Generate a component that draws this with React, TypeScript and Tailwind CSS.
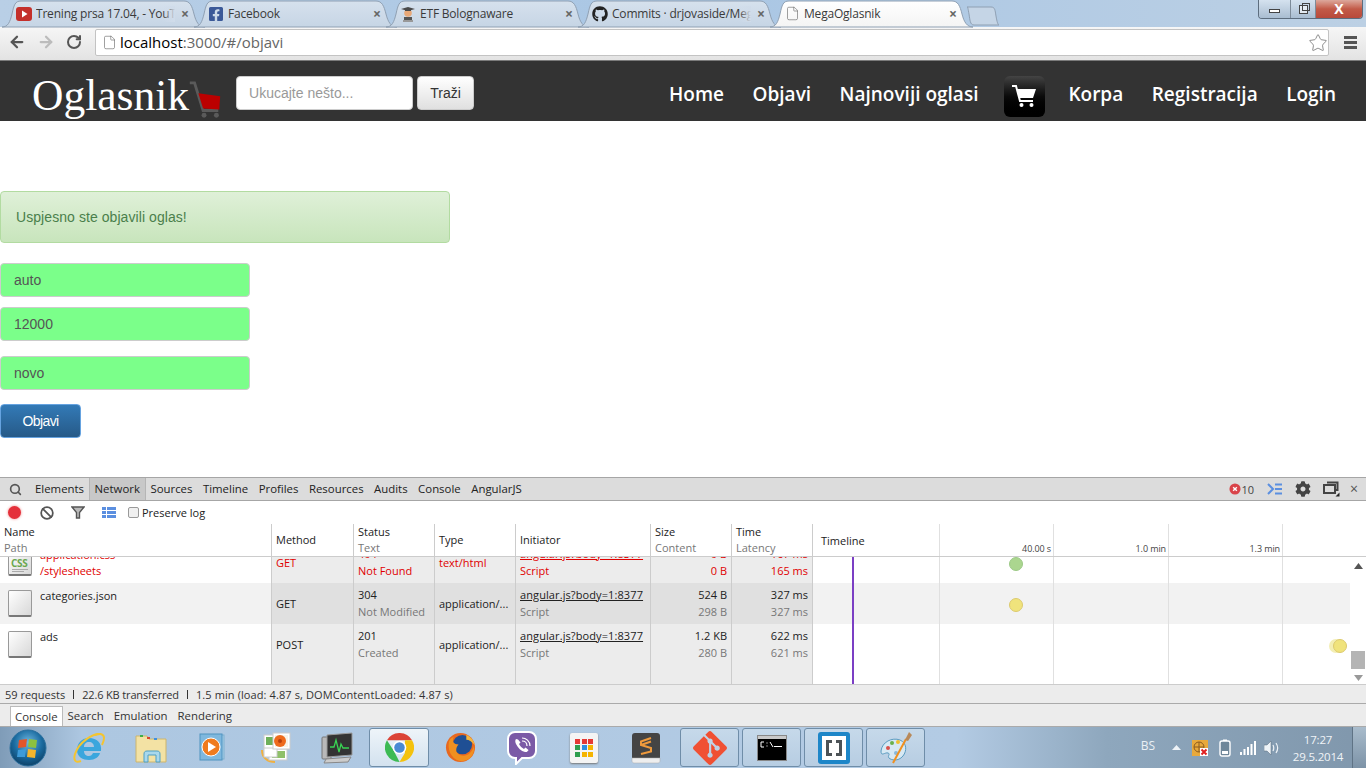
import React from "react";
import { ArrowLeft, ArrowRight, RotateCw, Star, File, Search, Ban } from "lucide-react";
import { FaGithub, FaFacebookSquare, FaCog } from "react-icons/fa";
import { SiGit } from "react-icons/si";

const ui = "font-['Open_Sans',sans-serif]";

function TabShape({ active }: { active?: boolean }) {
  return (
    <svg className="absolute left-0 top-0 overflow-visible" width="204" height="27" viewBox="0 0 204 27">
      <defs>
        <linearGradient id="tabIdle" x1="0" y1="0" x2="0" y2="1">
          <stop offset="0" stopColor="#d6e1ed" />
          <stop offset="1" stopColor="#c6d5e5" />
        </linearGradient>
        <linearGradient id="tabActive" x1="0" y1="0" x2="0" y2="1">
          <stop offset="0" stopColor="#ffffff" />
          <stop offset="1" stopColor="#f4f4f4" />
        </linearGradient>
      </defs>
      <path
        d="M0 27 C6 27 8 22 10 14 C12 5 13 1 19 1 L182 1 C188 1 190 6 192 14 C194 22 197 27 203 27 Z"
        fill={active ? "url(#tabActive)" : "url(#tabIdle)"}
        stroke="#8fa0b3"
        strokeWidth="1"
      />
    </svg>
  );
}

function Tab({ icon, title, active, fade }: { icon: React.ReactNode; title: string; active?: boolean; fade?: boolean }) {
  return (
    <div className={active ? "relative z-10 h-[27px] w-[192px] shrink-0" : "relative h-[27px] w-[192px] shrink-0"}>
      <TabShape active={active} />
      <div className="relative flex h-full items-center pl-[14px]">
        <span className="flex h-4 w-4 shrink-0 items-center justify-center">{icon}</span>
        <span className="relative ml-[4px] w-[139px] overflow-hidden whitespace-nowrap text-[12px] leading-4 tracking-[-0.2px] text-[#3a3a3a]">
          {title}
          {fade && <span className="absolute right-0 top-0 h-full w-3 bg-linear-to-r from-transparent to-[#d0dcea]" />}
        </span>
        <span className="ml-[6px] text-[14px] font-bold leading-none text-[#666]">×</span>
      </div>
    </div>
  );
}

function EtfIcon() {
  return (
    <svg width="16" height="16" viewBox="0 0 16 16">
      <circle cx="8" cy="7" r="3.8" fill="#e8a878" />
      <path d="M1 3 L8 1 L15 3 L8 5 Z" fill="#4a4a4a" />
      <path d="M5 3 h6 v2 h-6z" fill="#4a4a4a" />
      <rect x="4" y="11" width="8" height="3" fill="#555" />
      <rect x="3" y="14" width="10" height="2" fill="#999" />
    </svg>
  );
}

function WindowControls() {
  return (
    <div className="mr-[3px] flex h-[19px] overflow-hidden rounded-b-[4px] border border-t-0 border-[#5d6d7e]">
      <div className="flex w-[31px] items-center justify-center bg-linear-to-b from-[#d5e2ef] to-[#a9bdd1]">
        <div className="mt-1 h-[4px] w-[11px] border border-[#444] bg-white" />
      </div>
      <div className="flex w-[26px] items-center justify-center border-x border-[#7d8b99] bg-linear-to-b from-[#d5e2ef] to-[#a9bdd1]">
        <div className="relative h-[9px] w-[9px] border border-[#444] bg-white/60">
          <div className="absolute -right-[3px] -top-[3px] h-[8px] w-[8px] border border-[#444]" />
        </div>
      </div>
      <div className="flex w-[46px] items-center justify-center bg-linear-to-b from-[#dca89c] via-[#c25a48] to-[#b8493a] text-[14px] font-bold leading-none text-white">
        X
      </div>
    </div>
  );
}

function BrowserChrome() {
  return (
    <div className={ui}>
      <div className="flex h-[27px] items-start bg-linear-to-r from-[#b9cfe6] via-[#a9c6e4] to-[#bcd0e4] pl-[2px]">
        <div className="flex">
          <Tab fade title="Trening prsa 17.04, - YouT" icon={
            <svg width="16" height="14" viewBox="0 0 16 14"><rect width="16" height="14" rx="3" fill="#c4302b" /><path d="M6 3.5 L11.5 7 L6 10.5Z" fill="#fff" /></svg>
          } />
          <Tab title="Facebook" icon={<FaFacebookSquare className="text-[#3b5998]" size={16} />} />
          <Tab title="ETF Bolognaware" icon={<EtfIcon />} />
          <Tab fade title="Commits · drjovaside/Meg" icon={<FaGithub className="text-[#222]" size={16} />} />
          <Tab active title="MegaOglasnik" icon={<File size={15} strokeWidth={1} className="text-[#666]" />} />
        </div>
        <svg className="ml-[4px] mt-[6px]" width="34" height="20" viewBox="0 0 34 20">
          <path d="M1 1 H25 C29 1 29 4 30 10 C31 16 32 19 33 19 H8 C4 19 4 14 3 8 C2 3 2 1 1 1Z" fill="#c5d5e6" stroke="#8fa0b3" />
        </svg>
        <div className="flex-1" />
        <WindowControls />
      </div>
      <div className="flex h-[34px] items-start border-b border-[#7b7b7b] bg-linear-to-b from-[#f6f6f6] to-[#e3e3e3] pt-[2px]">
        <div className="flex h-[26px] w-[95px] items-center pl-[8px]">
          <ArrowLeft size={18} strokeWidth={3} className="text-[#555]" />
          <ArrowRight size={18} strokeWidth={3} className="ml-[11px] text-[#bcbcbc]" />
          <RotateCw size={16} strokeWidth={3} className="ml-[11px] text-[#555]" />
        </div>
        <div className="flex h-[27px] flex-1 items-center rounded-[2px] border border-[#c3c3c3] bg-white pl-[6px]">
          <File size={15} strokeWidth={1} className="text-[#666]" />
          <span className="ml-[3px] text-[15px] leading-none text-black">localhost<span className="text-[#666]">:3000/#/objavi</span></span>
          <div className="flex-1" />
          <Star size={20} strokeWidth={1} className="text-[#777]" />
        </div>
        <div className="flex h-[26px] w-[37px] flex-col items-center justify-center gap-[2px] pl-[6px]">
          <div className="h-[3px] w-[13px] bg-[#555]" />
          <div className="h-[3px] w-[13px] bg-[#555]" />
          <div className="h-[3px] w-[13px] bg-[#555]" />
        </div>
      </div>
    </div>
  );
}

function Navbar() {
  return (
    <nav className="flex h-[60px] items-center bg-[#333333] pl-[32px] pr-[30px] pt-[4px]">
      <span className="mt-[5px] font-['Liberation_Serif',serif] text-[43.5px] leading-none text-white">Oglasnik</span>
      <svg className="-ml-[1px] mt-[13px]" width="34" height="38" viewBox="0 0 34 40">
        <path d="M1 2 L6 2 L15 31 L31 31" fill="none" stroke="#5a5a5a" strokeWidth="3" />
        <path d="M10 13 L33 16 L32 30 L15 29 Z" fill="#bb0000" />
        <circle cx="16" cy="36" r="2.6" fill="#5a5a5a" />
        <circle cx="29" cy="36" r="2.6" fill="#5a5a5a" />
      </svg>
      <input
        readOnly
        placeholder="Ukucajte nešto..."
        className="ml-[14px] h-[34px] w-[177px] rounded-[4px] border border-[#ccc] bg-white px-[12px] font-['Liberation_Sans',sans-serif] text-[14px] placeholder:text-[#999]"
      />
      <button className="ml-[4px] h-[34px] w-[57px] rounded-[4px] border border-[#ccc] bg-linear-to-b from-white to-[#e0e0e0] font-['Liberation_Sans',sans-serif] text-[14px] text-[#333]">
        Traži
      </button>
      <div className="flex-1" />
      <div className={`mt-[2px] flex items-center gap-[28.5px] text-[19px] font-semibold leading-none text-white ${ui}`}>
        <span>Home</span>
        <span>Objavi</span>
        <span>Najnoviji oglasi</span>
        <span className="-ml-[3px] -mr-[5px] mt-[4px] flex h-[41px] w-[41px] items-center justify-center rounded-[6px] bg-linear-to-b from-[#444] via-[#0a0a0a] to-black">
          <svg width="26" height="24" viewBox="0 0 26 24">
            <path d="M1 2 L5 2 L9 17 L22 17" fill="none" stroke="#fff" strokeWidth="2" />
            <path d="M6 5 L25 5 L22 14 L8.5 14 Z" fill="#fff" />
            <circle cx="10.5" cy="21" r="2" fill="#fff" />
            <circle cx="20.5" cy="21" r="2" fill="#fff" />
          </svg>
        </span>
        <span>Korpa</span>
        <span>Registracija</span>
        <span>Login</span>
      </div>
    </nav>
  );
}

function Field({ value, className }: { value: string; className: string }) {
  return (
    <div className={`flex h-[34px] w-[250px] items-center rounded-[4px] border border-[#ccc] bg-[#7bff8a] pl-[13px] text-[14px] text-[#555] ${className}`}>
      {value}
    </div>
  );
}

function Page() {
  return (
    <main className="h-[356px] bg-white pt-[70px] font-['Liberation_Sans',sans-serif]">
      <div className="flex h-[52px] w-[450px] items-center rounded-[4px] border border-[#b2dba1] bg-linear-to-b from-[#dff0d8] to-[#c8e5bc] pl-[15px] text-[14px] tracking-[0.07px] text-[#4a7f4b]">
        Uspjesno ste objavili oglas!
      </div>
      <Field value="auto" className="mt-[20px]" />
      <Field value="12000" className="mt-[10px]" />
      <Field value="novo" className="mt-[15px]" />
      <button className="mt-[14px] flex h-[34px] w-[81px] items-center justify-center rounded-[4px] border border-[#66a3e0] bg-linear-to-b from-[#337ab7] to-[#265a88] text-[14px] tracking-[-0.6px] text-white">
        Objavi
      </button>
    </main>
  );
}

const COLS = [
  { w: "w-[272px]" },
  { w: "w-[82px]" },
  { w: "w-[81px]" },
  { w: "w-[81px]" },
  { w: "w-[135px]" },
  { w: "w-[81px]" },
  { w: "w-[81px]" },
];

function Head({ w, a, b }: { w: string; a: string; b?: string }) {
  return (
    <div className={`flex shrink-0 flex-col justify-center border-r border-[#ccc] pl-[4px] ${w}`}>
      <div className="leading-[16px] text-[#222]">{a}</div>
      {b && <div className="leading-[16px] text-[#777]">{b}</div>}
    </div>
  );
}

function Tick({ w, label }: { w: string; label: string }) {
  return (
    <div className={`relative shrink-0 border-r border-[#e0e0e0] ${w}`}>
      <span className="absolute bottom-[1px] right-[2px] whitespace-nowrap text-[9px] leading-[12px] tracking-[-0.1px] text-[#444]">{label}</span>
    </div>
  );
}

function TableHeader() {
  return (
    <div className="flex h-[33px] border-b border-[#ccc] bg-white">
      <Head w={COLS[0].w} a="Name" b="Path" />
      <Head w={COLS[1].w} a="Method" />
      <Head w={COLS[2].w} a="Status" b="Text" />
      <Head w={COLS[3].w} a="Type" />
      <Head w={COLS[4].w} a="Initiator" />
      <Head w={COLS[5].w} a="Size" b="Content" />
      <Head w={COLS[6].w} a="Time" b="Latency" />
      <div className="flex w-[127px] shrink-0 items-center border-r border-[#e0e0e0] pl-[8px] text-[#222]">Timeline</div>
      <Tick w="w-[114px]" label="40.00 s" />
      <Tick w="w-[115px]" label="1.0 min" />
      <Tick w="w-[114px]" label="1.3 min" />
      <div className="flex-1" />
    </div>
  );
}

type Row = {
  icon: "css" | "blank";
  name: string;
  path?: string;
  method: string;
  status: string;
  text: string;
  type: string;
  size: string;
  content: string;
  time: string;
  latency: string;
  error?: boolean;
  zebra?: boolean;
};

const ROWS: Row[] = [
  { icon: "css", name: "application.css", path: "/stylesheets", method: "GET", status: "404", text: "Not Found", type: "text/html", size: "0 B", content: "0 B", time: "167 ms", latency: "165 ms", error: true },
  { icon: "blank", name: "categories.json", method: "GET", status: "304", text: "Not Modified", type: "application/...", size: "524 B", content: "298 B", time: "327 ms", latency: "327 ms", zebra: true },
  { icon: "blank", name: "ads", method: "POST", status: "201", text: "Created", type: "application/...", size: "1.2 KB", content: "280 B", time: "622 ms", latency: "621 ms" },
];

function FileIcon({ kind }: { kind: "css" | "blank" }) {
  return (
    <div className="relative mt-[7px] h-[27px] w-[24px] shrink-0 rounded-[2px] border border-[#999] border-b-2 border-b-[#777] bg-linear-to-br from-white to-[#d8d8d8]">
      {kind === "css" && (
        <>
          <span className="absolute left-[2px] top-[8px] text-[10px] font-bold leading-[10px] tracking-[-0.3px] text-[#6aa84f]">CSS</span>
          <span className="absolute left-[3px] top-[19px] h-px w-[16px] bg-[#aaa]" />
          <span className="absolute left-[3px] top-[21px] h-px w-[12px] bg-[#aaa]" />
        </>
      )}
    </div>
  );
}

function RowView({ r }: { r: Row }) {
  const main = r.error ? "text-[#e00000]" : "text-[#222]";
  const sub = r.error ? "text-[#e00000]" : "text-[#777]";
  const cell = r.zebra ? "bg-[#e0e0e0]" : "bg-[#ececec]";
  const base = r.zebra ? "bg-[#f2f2f2]" : "bg-white";
  const two = `flex shrink-0 flex-col border-r border-[#ccc] pt-[3px] leading-[17px] ${cell}`;
  const mid = `flex shrink-0 items-center border-r border-[#ccc] pl-[4px] ${cell}`;
  return (
    <div className={`flex h-[41px] ${base}`}>
      <div className={`flex shrink-0 border-r border-[#ccc] pl-[8px] ${COLS[0].w}`}>
        <FileIcon kind={r.icon} />
        <div className={`ml-[8px] pt-[4px] leading-[17px] ${main}`}>
          <div>{r.name}</div>
          {r.path && <div className="-mt-[1px]">{r.path}</div>}
        </div>
      </div>
      <div className={`${mid} ${COLS[1].w} ${main}`}>{r.method}</div>
      <div className={`${two} pl-[4px] ${COLS[2].w}`}>
        <span className={main}>{r.status}</span>
        <span className={sub}>{r.text}</span>
      </div>
      <div className={`${mid} ${COLS[3].w} ${main}`}>{r.type}</div>
      <div className={`${two} pl-[4px] ${COLS[4].w}`}>
        <span className={`underline tracking-[0.1px] ${main}`}>angular.js?body=1:8377</span>
        <span className={sub}>Script</span>
      </div>
      <div className={`${two} items-end pr-[4px] ${COLS[5].w}`}>
        <span className={main}>{r.size}</span>
        <span className={sub}>{r.content}</span>
      </div>
      <div className={`${two} items-end pr-[4px] ${COLS[6].w}`}>
        <span className={main}>{r.time}</span>
        <span className={sub}>{r.latency}</span>
      </div>
      <div className="flex-1" />
    </div>
  );
}

function Filler() {
  const c = "shrink-0 border-r border-[#ccc] bg-[#ececec]";
  return (
    <div className="flex h-[20px] bg-white">
      <div className={`shrink-0 border-r border-[#ccc] bg-white ${COLS[0].w}`} />
      {COLS.slice(1).map((col, i) => (
        <div key={i} className={`${c} ${col.w}`} />
      ))}
    </div>
  );
}

function Dot({ className, color }: { className: string; color: string }) {
  return <span className={`absolute h-[14px] w-[14px] rounded-full border ${color} ${className}`} />;
}

function TableBody() {
  return (
    <div className="flex h-[128px] border-b border-[#ccc]">
      <div className="relative flex-1 overflow-hidden">
        <div className="-mt-[15px]">
          {ROWS.map((r) => (
            <RowView key={r.name} r={r} />
          ))}
          <Filler />
        </div>
        <span className="absolute bottom-0 left-[852px] top-0 w-[2px] bg-[#7b3fc4]" />
        <span className="absolute bottom-0 left-[939px] top-0 w-px bg-[#e0e0e0]" />
        <span className="absolute bottom-0 left-[1053px] top-0 w-px bg-[#e0e0e0]" />
        <span className="absolute bottom-0 left-[1168px] top-0 w-px bg-[#e0e0e0]" />
        <span className="absolute bottom-0 left-[1282px] top-0 w-px bg-[#e0e0e0]" />
        <Dot className="left-[1009px] top-[0px]" color="border-[#9cc986] bg-[#abd68f]" />
        <Dot className="left-[1009px] top-[41px]" color="border-[#dcca6e] bg-[#f0e37c]" />
        <span className="absolute left-[1329px] top-[82px] h-[14px] w-[14px] rounded-full bg-[#f3eeb4]" />
        <Dot className="left-[1333px] top-[82px]" color="border-[#dcca6e] bg-[#f0e37c]" />
      </div>
      <div className="flex w-[16px] shrink-0 flex-col items-center bg-white">
        <svg className="mt-[6px]" width="9" height="6" viewBox="0 0 9 6"><path d="M4.5 0 L9 6 H0Z" fill="#555" /></svg>
        <div className="flex-1" />
        <div className="h-[18px] w-[14px] bg-[#b4b4b4]" />
        <svg className="mb-[3px] mt-[6px]" width="9" height="6" viewBox="0 0 9 6"><path d="M0 0 H9 L4.5 6Z" fill="#999" /></svg>
      </div>
    </div>
  );
}

function DevTools() {
  const panels = ["Elements", "Network", "Sources", "Timeline", "Profiles", "Resources", "Audits", "Console", "AngularJS"];
  return (
    <section className={`text-[11px] leading-none text-[#222] ${ui}`}>
      <div className="flex h-[24px] items-center border-y border-[#a6a6a6] bg-[#dcdcdc] pl-[9px]">
        <Search size={13} strokeWidth={3} className="text-[#555]" />
        <div className="ml-[13px] flex h-full items-center gap-[10.5px] text-[11.4px]">
          {panels.map((p) =>
            p === "Network" ? (
              <span key={p} className="-mx-[6px] flex h-full items-center border-x border-[#b5b5b5] bg-[#c8c8c8] px-[5px]">{p}</span>
            ) : (
              <span key={p}>{p}</span>
            ),
          )}
        </div>
        <div className="flex-1" />
        <svg width="12" height="12" viewBox="0 0 13 13">
          <circle cx="6.5" cy="6.5" r="6" fill="#d9444a" />
          <path d="M4.5 4.5 L8.5 8.5 M8.5 4.5 L4.5 8.5" stroke="#fff" strokeWidth="1.5" />
        </svg>
        <span className="text-[#444]">10</span>
        <svg className="ml-[13px]" width="16" height="12" viewBox="0 0 16 12">
          <path d="M1 1 L6 6 L1 11" fill="none" stroke="#5b8fe0" strokeWidth="2" />
          <path d="M8 1.5 H15 M8 6 H15 M8 10.5 H15" stroke="#5b8fe0" strokeWidth="2" />
        </svg>
        <FaCog size={16} className="ml-[12px] text-[#444]" />
        <svg className="ml-[12px]" width="17" height="16" viewBox="0 0 17 16">
          <path d="M4 1.5 H14.5 V9 H12" fill="none" stroke="#444" strokeWidth="2" />
          <rect x="1" y="4" width="11" height="8" fill="#dcdcdc" stroke="#444" strokeWidth="2" />
          <path d="M16.5 15.5 H12.5 L16.5 11.5Z" fill="#222" />
        </svg>
        <span className="ml-[10px] mr-[8px] text-[14px] text-[#555]">×</span>
      </div>
      <div className="flex h-[23px] items-center bg-white pl-[8px]">
        <span className="h-[13px] w-[13px] rounded-full bg-[#e4303a] shadow-[0_0_3px_#e88]" />
        <Ban size={14} strokeWidth={3} className="ml-[19px] text-[#555]" />
        <svg className="ml-[17px]" width="14" height="13" viewBox="0 0 14 13">
          <path d="M1 1 H13 L8.5 6.5 V12 H5.5 V6.5Z" fill="#bbb" stroke="#555" strokeWidth="1.4" />
        </svg>
        <svg className="ml-[17px]" width="14" height="11" viewBox="0 0 14 11">
          <path d="M0 0 H4 V3 H0Z M0 4 H4 V7 H0Z M0 8 H4 V11 H0Z M5 0 H14 V3 H5Z M5 4 H14 V7 H5Z M5 8 H14 V11 H5Z" fill="#5b8fe0" />
        </svg>
        <span className="ml-[12px] h-[11px] w-[11px] rounded-[2px] border border-[#999] bg-[#f0f0f0]" />
        <span className="ml-[3px]">Preserve log</span>
      </div>
      <TableHeader />
      <TableBody />
      <div className="flex h-[19px] items-center gap-[8px] border-b border-[#aaa] bg-[#ececec] pl-[5px] text-[#333]">
        <span>59 requests</span>
        <span className="h-[9px] w-px bg-[#333]" />
        <span className="tracking-[-0.15px]">22.6 KB transferred</span>
        <span className="h-[9px] w-px bg-[#333]" />
        <span className="tracking-[0.1px]">1.5 min (load: 4.87 s, DOMContentLoaded: 4.87 s)</span>
      </div>
      <div className="flex h-[23px] items-end gap-[5px] border-b border-[#aaa] bg-[#ececec] pl-[10px] text-[11.4px] text-[#333]">
        <span className="flex h-[20px] items-center border border-b-0 border-[#bbb] bg-white px-[4px]">Console</span>
        <span className="flex h-[20px] items-center">Search</span>
        <span className="ml-[5px] flex h-[20px] items-center">Emulation</span>
        <span className="ml-[5px] flex h-[20px] items-center">Rendering</span>
      </div>
    </section>
  );
}

function WinOrb() {
  return (
    <svg width="38" height="38" viewBox="0 0 38 38">
      <defs>
        <radialGradient id="orb" cx="0.5" cy="0.35" r="0.7">
          <stop offset="0" stopColor="#6fb7e0" />
          <stop offset="0.55" stopColor="#1a6ba0" />
          <stop offset="1" stopColor="#0b3a5e" />
        </radialGradient>
      </defs>
      <circle cx="19" cy="19" r="18" fill="url(#orb)" stroke="#2a6f9e" />
      <path d="M10 11 L18 10 L17 18 L9 19Z" fill="#e2552b" />
      <path d="M20 10 L28 11 L27 19 L19 18Z" fill="#8cc13f" />
      <path d="M9 21 L17 20 L16 28 L8 28Z" fill="#3d9bd9" />
      <path d="M19 20 L27 21 L26 29 L18 28Z" fill="#f5b52c" />
    </svg>
  );
}

function IeIcon() {
  return (
    <svg width="32" height="32" viewBox="0 0 32 32">
      <path d="M16 6 C8 6 4 12 4 18 C4 25 10 28 16 28 C22 28 26 25 27 21 H20 C19 23 18 24 16 24 C13 24 11 22 11 19 H28 C29 11 24 6 16 6Z M11 15 C11 12 13 10 16 10 C19 10 21 12 21 15Z" fill="#3aa6dd" fillRule="evenodd" />
      <path d="M28 2 C20 1 6 10 2 22 C0 29 3 31 8 29" fill="none" stroke="#f4c430" strokeWidth="2" />
      <path d="M22 3 C27 1 31 2 31 6 C31 9 30 11 29 13" fill="none" stroke="#f4c430" strokeWidth="2" />
    </svg>
  );
}

function FolderIcon() {
  return (
    <svg width="32" height="30" viewBox="0 0 32 30">
      <path d="M1 3 H12 L14 6 H31 V29 H1Z" fill="#f3e2a4" stroke="#cdb56c" />
      <rect x="5" y="2" width="3" height="2" fill="#3fae49" />
      <rect x="12" y="4" width="3" height="2" fill="#d9452f" />
      <rect x="19" y="5" width="3" height="2" fill="#3f8fe0" />
      <path d="M9 29 V21 C9 19 10 18 12 18 H22 C24 18 25 19 25 21 V29 H21 V22 H13 V29Z" fill="#a9d8ec" stroke="#4f9fc4" />
    </svg>
  );
}

function PlayerIcon() {
  return (
    <svg width="30" height="30" viewBox="0 0 30 30">
      <rect x="7" y="2" width="19" height="24" fill="#a8cfe8" stroke="#7fb0d0" />
      <rect x="2" y="1" width="22" height="26" fill="#7fb8de" stroke="#4f93c0" />
      <circle cx="13" cy="14" r="9" fill="#ef7b1e" stroke="#fff" strokeWidth="1" />
      <path d="M10 9 L18 14 L10 19Z" fill="#fff" />
    </svg>
  );
}

function PhotoIcon() {
  return (
    <svg width="32" height="32" viewBox="0 0 32 32">
      <path d="M3 18 C3 26 9 30 16 30" fill="none" stroke="#f0b040" strokeWidth="2" />
      <rect x="5" y="3" width="14" height="14" fill="#fff" stroke="#ccc" />
      <rect x="7" y="5" width="10" height="8" fill="#6fb05a" />
      <rect x="10" y="17" width="18" height="11" fill="#fff" stroke="#ccc" />
      <rect x="13" y="19" width="13" height="7" fill="#8fc069" />
      <rect x="5" y="16" width="13" height="9" fill="#fff" stroke="#ccc" />
      <rect x="14" y="1" width="17" height="16" fill="#fff" stroke="#ccc" />
      <rect x="16" y="3" width="13" height="12" fill="#f7f3e8" />
      <circle cx="21" cy="9" r="6" fill="#ee6a1c" />
      <circle cx="21" cy="9" r="2" fill="#b9400c" />
    </svg>
  );
}

function MonitorIcon() {
  return (
    <svg width="32" height="32" viewBox="0 0 32 32">
      <rect x="1" y="5" width="9" height="22" rx="1" fill="#b9b9b9" stroke="#777" />
      <path d="M6 3 L31 1 V23 L6 25Z" fill="#333" stroke="#999" />
      <path d="M9 15 H13 L15 8 L18 20 L20 12 L22 16 H28" fill="none" stroke="#39d353" strokeWidth="1.3" />
      <path d="M5 27 L30 25 L27 30 L3 31Z" fill="#ccc" stroke="#888" />
    </svg>
  );
}

function ChromeIcon() {
  return (
    <svg width="29" height="29" viewBox="-16 -16 32 32">
      <path d="M-13.86 -8 A16 16 0 0 1 13.86 -8 L0 -8 Z" fill="#db4437" />
      <path d="M13.86 -8 A16 16 0 0 1 0 16 L6 6 L6 -8Z" fill="#f4c20d" />
      <path d="M0 16 A16 16 0 0 1 -13.86 -8 L-6 4Z" fill="#3cba54" />
      <circle r="7.5" fill="#fff" />
      <circle r="5.8" fill="#4a8ad4" />
    </svg>
  );
}

function FirefoxIcon() {
  return (
    <svg width="31" height="31" viewBox="0 0 32 32">
      <circle cx="16" cy="16" r="15" fill="#e8681f" />
      <circle cx="18" cy="13" r="10" fill="#1f4f94" />
      <path d="M4 10 C2 22 10 31 19 30 C27 29 31 22 30 14 C28 22 22 26 16 24 C10 22 11 16 14 13 C9 13 7 10 9 5 C6 6 5 8 4 10Z" fill="#f09020" />
      <path d="M22 3 C27 5 30 9 31 14 C28 10 25 8 22 8Z" fill="#f4b63c" />
    </svg>
  );
}

function ViberIcon() {
  return (
    <svg width="30" height="34" viewBox="0 0 30 34">
      <path d="M8 1 H22 C26 1 29 4 29 8 V20 C29 24 26 27 22 27 H15 L9 33 V27 H8 C4 27 1 24 1 20 V8 C1 4 4 1 8 1Z" fill="#7b5aa6" stroke="#fff" strokeWidth="2" />
      <path d="M9 8 C8 9 8 11 9 13 C11 17 14 20 18 21 C20 21.5 21 20 21.5 19 L18.5 16.5 L17 18 C15 17 13 15 12 13 L13.5 11.5 L11 8.5Z" fill="#fff" />
      <path d="M15 7 C19 7 23 10 23 15 M15 10 C18 10 20 12 20 15" fill="none" stroke="#fff" strokeWidth="1.2" />
    </svg>
  );
}

function AppsIcon() {
  const colors = ["bg-[#e53935]", "bg-[#e53935]", "bg-[#e53935]", "bg-[#2e9e4f]", "bg-[#2f8fe0]", "bg-[#f5b400]", "bg-[#2e9e4f]", "bg-[#f5b400]", "bg-[#f5b400]"];
  return (
    <span className="grid h-[30px] w-[28px] grid-cols-3 content-center justify-center gap-[1.5px] rounded-[2px] bg-[#f4f4f4] px-[5px] shadow-[0_1px_2px_#777]">
      {colors.map((c, i) => (
        <span key={i} className={`h-[5px] w-[5px] ${c}`} />
      ))}
    </span>
  );
}

function SublimeIcon() {
  return (
    <svg width="30" height="32" viewBox="0 0 30 32">
      <rect x="1" y="1" width="28" height="27" rx="3" fill="#444" />
      <path d="M1 26 H29 V29 C29 30 28 31 27 31 H3 C2 31 1 30 1 29Z" fill="#eee" stroke="#aaa" strokeWidth="0.5" />
      <path d="M20 8 L10 11.5 V15 L20 18 V21.5 L10 24 M10 15 L20 11.5" fill="none" stroke="#ef9a3c" strokeWidth="2" transform="translate(0 -2)" />
    </svg>
  );
}

function CmdIcon() {
  return (
    <svg width="30" height="26" viewBox="0 0 30 26">
      <rect x="0.5" y="0.5" width="29" height="25" fill="#000" stroke="#888" />
      <rect x="1" y="1" width="28" height="3" fill="#c9c9c9" />
      <path d="M7 7 H4 V12 H7 M10 7.5 V8.5 M10 10.5 V11.5 M13 7 L16 12 M17 11.5 H25" fill="none" stroke="#fff" strokeWidth="1" />
    </svg>
  );
}

function BracketsIcon() {
  return (
    <svg width="32" height="32" viewBox="0 0 32 32">
      <rect width="32" height="32" rx="3" fill="#1d86c8" />
      <rect x="4" y="4" width="24" height="24" fill="#fff" />
      <path d="M14 8 H8 V24 H14 V21 H11 V11 H14Z M18 8 H24 V24 H18 V21 H21 V11 H18Z" fill="#4d5357" />
    </svg>
  );
}

function PaletteIcon() {
  return (
    <svg width="34" height="34" viewBox="0 0 34 34">
      <path d="M2 20 C3 11 13 6 21 9 C28 12 28 20 24 25 C19 31 12 29 10 27 C8 25 12 23 9 22 C6 21 2 26 2 20Z" fill="#d7e9f4" stroke="#5b9cc0" />
      <circle cx="9" cy="17" r="2" fill="#d9504a" />
      <circle cx="13" cy="12" r="2" fill="#6ab04c" />
      <circle cx="19" cy="11" r="2" fill="#f0c030" />
      <circle cx="17" cy="22" r="2" fill="#8ab8d8" />
      <path d="M14 32 L27 8" stroke="#f09020" strokeWidth="2" />
      <path d="M26 9 L30 1 L33 4 L29 10Z" fill="#b8895a" />
    </svg>
  );
}

function TaskButton({ children, active, narrow }: { children: React.ReactNode; active?: boolean; narrow?: boolean }) {
  const cls = active
    ? "flex h-[39px] w-[60px] items-center justify-center rounded-[3px] border border-[#6f8da8] bg-linear-to-b from-[#eef4f9] to-[#d3e2ef]"
    : narrow
      ? "flex h-[41px] w-[62px] items-center justify-center"
      : "flex h-[39px] w-[59px] items-center justify-center rounded-[3px] border border-[#6f8da8] bg-linear-to-b from-[#c6d9ea] to-[#b7cde2]";
  return <div className={cls}>{children}</div>;
}

function Taskbar() {
  return (
    <footer className={`flex h-[41px] items-center bg-[linear-gradient(to_right,#7f9cb8_0%,#adc7e1_6%,#b3cbe4_70%,#8ea7bd_81%,#8097ac_100%)] ${ui}`}>
      <div className="flex w-[55px] shrink-0 justify-center pl-[1px]"><WinOrb /></div>
      <div className="flex w-[314px] shrink-0 pl-[3px]">
        <TaskButton narrow><IeIcon /></TaskButton>
        <TaskButton narrow><FolderIcon /></TaskButton>
        <TaskButton narrow><PlayerIcon /></TaskButton>
        <TaskButton narrow><PhotoIcon /></TaskButton>
        <TaskButton narrow><MonitorIcon /></TaskButton>
      </div>
      <TaskButton active><ChromeIcon /></TaskButton>
      <div className="flex shrink-0">
        <TaskButton narrow><FirefoxIcon /></TaskButton>
        <TaskButton narrow><ViberIcon /></TaskButton>
        <TaskButton narrow><AppsIcon /></TaskButton>
        <TaskButton narrow><SublimeIcon /></TaskButton>
      </div>
      <div className="flex shrink-0 gap-[3px] pl-[3px]">
        <TaskButton><SiGit size={34} className="text-[#f05033]" /></TaskButton>
        <TaskButton><CmdIcon /></TaskButton>
        <TaskButton><BracketsIcon /></TaskButton>
        <TaskButton><PaletteIcon /></TaskButton>
      </div>
      <div className="flex-1" />
      <span className="mb-[4px] text-[12px] text-[#eaf0f5]">BS</span>
      <svg className="ml-[17px]" width="9" height="5" viewBox="0 0 11 6"><path d="M5.5 0 L11 6 H0Z" fill="#eef3f7" /></svg>
      <svg className="ml-[11px]" width="16" height="16" viewBox="0 0 16 16">
        <rect width="16" height="16" fill="#e8a93c" />
        <circle cx="7" cy="7" r="5" fill="none" stroke="#8a5a20" />
        <path d="M2 7 H12 M7 2 V12" stroke="#8a5a20" />
        <rect x="8" y="8" width="8" height="8" fill="#fff" />
        <path d="M9.5 9.5 L14.5 14.5 M14.5 9.5 L9.5 14.5" stroke="#e02020" strokeWidth="2" />
      </svg>
      <svg className="ml-[11px]" width="12" height="18" viewBox="0 0 12 18">
        <rect x="1" y="2" width="10" height="15" rx="2" fill="#6f8799" stroke="#fff" strokeWidth="1.4" />
        <rect x="3" y="12" width="6" height="3" fill="#fff" />
        <rect x="4" y="0.5" width="4" height="1.5" fill="#fff" />
      </svg>
      <svg className="ml-[9px]" width="16" height="14" viewBox="0 0 16 14">
        <path d="M0 11 H2 V14 H0Z M3.5 8 H5.5 V14 H3.5Z M7 6 H9 V14 H7Z M10.5 3 H12.5 V14 H10.5Z M14 0 H16 V14 H14Z" fill="#fff" />
      </svg>
      <svg className="ml-[8px]" width="15" height="16" viewBox="0 0 15 16">
        <path d="M0 5 H3 L7 1 V15 L3 11 H0Z" fill="#eef3f7" stroke="#56687a" strokeWidth="0.5" />
        <path d="M9 5 C10 7 10 9 9 11 M12 3 C14 6 14 10 12 13" fill="none" stroke="#eef3f7" strokeWidth="1.2" />
      </svg>
      <div className="ml-[11px] flex w-[56px] flex-col items-center text-[11.5px] leading-[17px] tracking-[-0.2px] text-[#f0f4f7]">
        <span>17:27</span>
        <span>29.5.2014</span>
      </div>
      <div className="ml-[6px] h-full w-[14px] border-l border-[#5f7385] bg-linear-to-b from-[#a9bccc] to-[#7d93a7]" />
    </footer>
  );
}

export default function App() {
  return (
    <div className="flex h-[768px] w-[1366px] flex-col overflow-hidden bg-white">
      <BrowserChrome />
      <Navbar />
      <Page />
      <DevTools />
      <Taskbar />
    </div>
  );
}
